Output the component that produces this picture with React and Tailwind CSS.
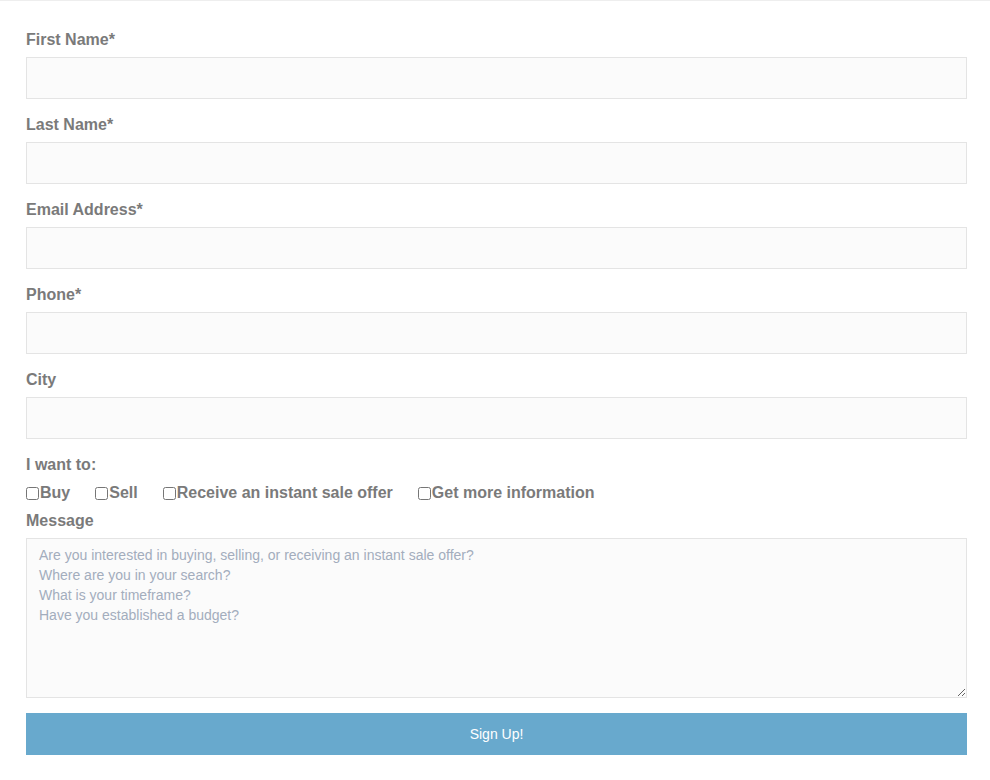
export default function App() {
  const fields = ["First Name*", "Last Name*", "Email Address*", "Phone*", "City"];
  const opts = ["Buy", "Sell", "Receive an instant sale offer", "Get more information"];
  return (
    <div className="w-[990px] min-h-[780px] bg-white border-t border-[#eeeeee] pt-[28px] pl-[26px] pr-[23px]" style={{ fontFamily: '"Liberation Sans", Arial, sans-serif' }}>
      {fields.map((f) => (
        <div key={f} className="mb-[15px]">
          <label className="block text-[16px] leading-[20px] font-bold text-[#7a7a7a] pt-[1px] mb-[7px]">{f}</label>
          <input type="text" className="block w-full h-[42px] bg-[#fbfbfb] border border-[#e4e4e4] outline-none" />
        </div>
      ))}
      <div className="text-[16px] leading-[20px] font-bold text-[#7a7a7a] pt-[1px] mb-[7px]">I want to:</div>
      <div className="flex gap-[25px] mb-[7px] pt-[1px] h-[21px] items-center">
        {opts.map((o) => (
          <label key={o} className="flex items-center text-[16px] leading-[20px] font-bold text-[#7a7a7a]">
            <input type="checkbox" className="w-[13px] h-[13px] mr-[1px]" />
            {o}
          </label>
        ))}
      </div>
      <div className="text-[16px] leading-[20px] font-bold text-[#7a7a7a] pt-[1px] mb-[7px]">Message</div>
      <textarea
        className="block w-full h-[160px] bg-[#fbfbfb] border border-[#e4e4e4] outline-none px-[12px] pt-[6px] text-[14px] leading-[20px] placeholder:text-[#a3adbd] mb-[15px]"
        placeholder={"Are you interested in buying, selling, or receiving an instant sale offer?\nWhere are you in your search?\nWhat is your timeframe?\nHave you established a budget?"}
      />
      <button className="block w-full h-[42px] bg-[#68a9cd] text-white text-[14px]">Sign Up!</button>
    </div>
  );
}
